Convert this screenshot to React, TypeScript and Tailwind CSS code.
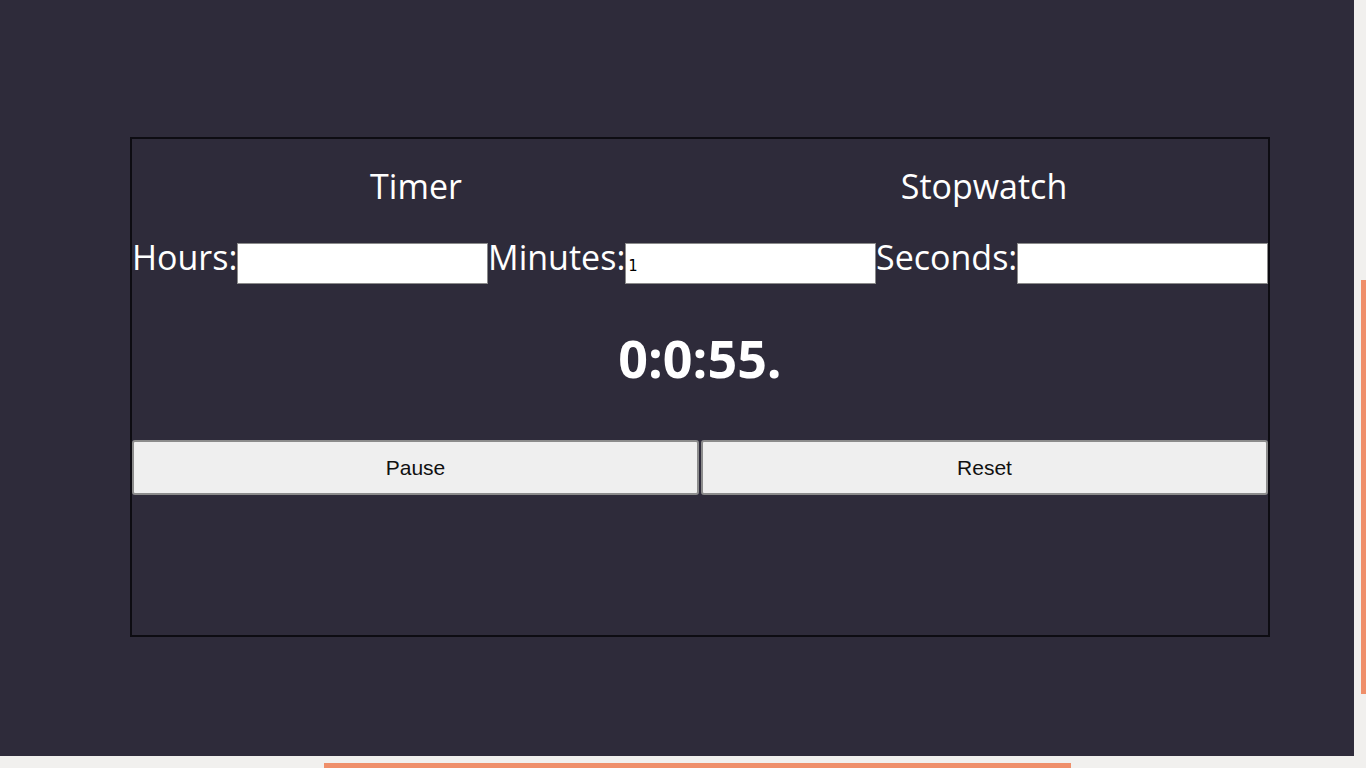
import React, { useState } from 'react';

export default function App() {
  const [hours, setHours] = useState('');
  const [minutes, setMinutes] = useState('1');
  const [seconds, setSeconds] = useState('');

  const fields = [
    { label: 'Hours:', value: hours, set: setHours },
    { label: 'Minutes:', value: minutes, set: setMinutes },
    { label: 'Seconds:', value: seconds, set: setSeconds },
  ];

  return (
    <div className="h-[768px] w-full overflow-hidden bg-[#f1f0ee] font-['Open_Sans',sans-serif]">
      <div className="flex items-start">
        {/* main dark panel */}
        <div className="h-[756px] w-[1354px] shrink-0 bg-[#2e2b3a] pt-[137px] pl-[130px]">
          <div className="h-[500px] w-[1140px] border-2 border-[#0d0c12] text-white">
            {/* mode headings */}
            <div className="mt-[23px] grid grid-cols-2 text-center text-[34px] leading-[48px]">
              <div>Timer</div>
              <div>Stopwatch</div>
            </div>

            {/* time inputs */}
            <div className="mt-[30px] flex items-start">
              {fields.map((f) => (
                <React.Fragment key={f.label}>
                  <span className="shrink-0 text-[34px] leading-[34px]">{f.label}</span>
                  <input
                    type="text"
                    value={f.value}
                    onChange={(e) => f.set(e.target.value)}
                    className="mt-[3px] h-[41px] min-w-0 flex-1 border border-[#8a8a8a] bg-white px-[2px] pt-[4px] font-['DejaVu_Sans_Mono',monospace] text-[15px] text-black outline-none"
                  />
                </React.Fragment>
              ))}
            </div>

            {/* countdown display */}
            <div className="mt-[44px] text-center text-[52px] font-bold leading-[60px]">0:0:55.</div>

            {/* controls */}
            <div className="mt-[52px] flex gap-[2px]">
              <button className="h-[55px] flex-1 rounded-[3px] border-2 border-[#8c8c8c] bg-[#efefef] font-['Liberation_Sans',Arial,sans-serif] text-[21px] text-[#111]">
                Pause
              </button>
              <button className="h-[55px] flex-1 rounded-[3px] border-2 border-[#8c8c8c] bg-[#efefef] font-['Liberation_Sans',Arial,sans-serif] text-[21px] text-[#111]">
                Reset
              </button>
            </div>
          </div>
        </div>

        {/* side accent */}
        <div className="ml-[7px] mt-[280px] h-[414px] w-[5px] shrink-0 bg-[#ef8f6a]" />
      </div>

      {/* bottom accent */}
      <div className="ml-[324px] mt-[7px] h-[5px] w-[747px] bg-[#ef8f6a]" />
    </div>
  );
}
